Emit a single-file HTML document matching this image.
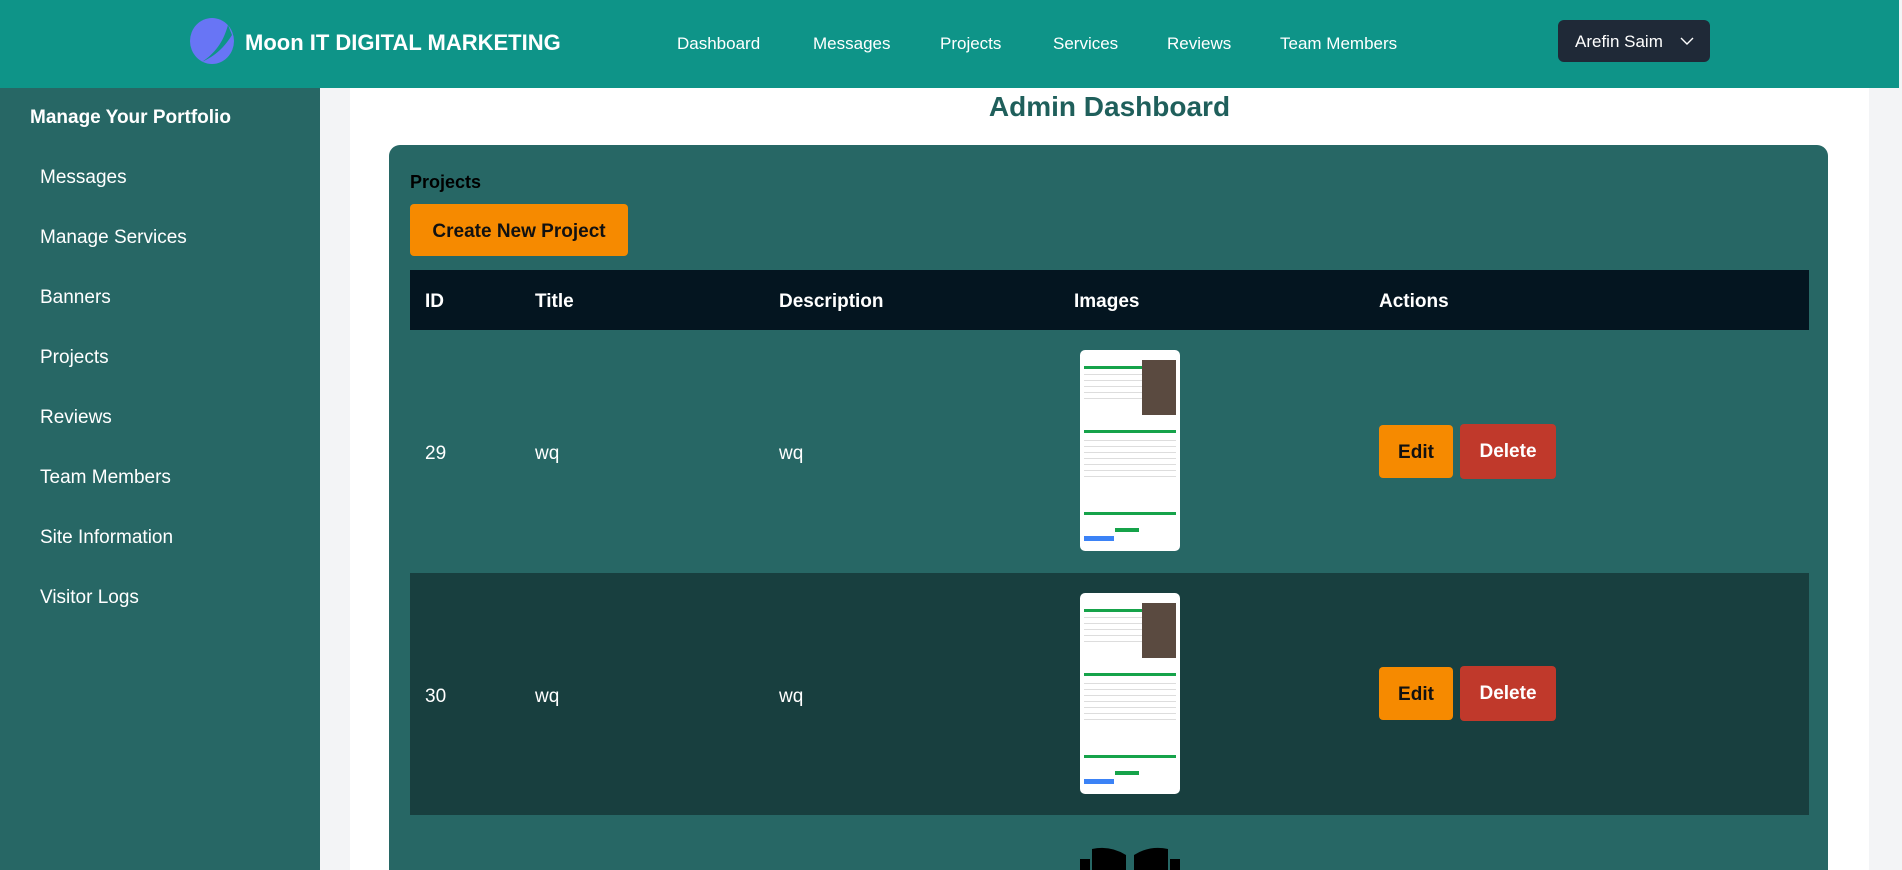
<!DOCTYPE html>
<html style="width:1902px;height:870px;overflow:hidden"><head><meta charset="utf-8"><style>
*{margin:0;padding:0;box-sizing:border-box}
body{width:1902px;height:870px;overflow:hidden;background:#f3f4f6;font-family:"Liberation Sans",sans-serif;position:relative}
.hdr{position:absolute;left:0;top:0;width:1899px;height:88px;background:#0e9488;color:#fff}
.abs{position:absolute}
.nav{position:absolute;top:34px;font-size:17px;color:#fff}
.side{position:absolute;left:0;top:88px;width:320px;height:782px;background:#276765;color:#fff}
.side .it{position:absolute;left:40px;font-size:19px}
.panel{position:absolute;left:350px;top:88px;width:1519px;height:782px;background:#fff}
.card{position:absolute;left:389px;top:145px;width:1439px;height:725px;background:#276765;border-radius:11px 11px 0 0}
.th{position:absolute;top:291px;font-size:19px;font-weight:bold;color:#fff}
.td{position:absolute;font-size:19px;color:#fff}
.thumb{position:absolute;left:1080px;width:100px;height:201px;background:#fff;border-radius:5px;overflow:hidden}
.btn{position:absolute;border-radius:4px;font-size:19px;font-weight:bold;text-align:center;line-height:55px}
</style></head><body>
<div class="hdr">
 <svg class="abs" style="left:188px;top:17px" width="48" height="48" viewBox="0 0 48 48"><ellipse cx="24" cy="24" rx="22" ry="23" fill="#6875f5"/><path d="M40 8 C36 22 30 34 14 45 C24 40 34 34 44 18 Z" fill="#0e9488"/></svg>
 <div class="abs" style="left:245px;top:30px;font-size:22px;font-weight:bold">Moon IT DIGITAL MARKETING</div>
 <div class="nav" style="left:677px">Dashboard</div>
 <div class="nav" style="left:813px">Messages</div>
 <div class="nav" style="left:940px">Projects</div>
 <div class="nav" style="left:1053px">Services</div>
 <div class="nav" style="left:1167px">Reviews</div>
 <div class="nav" style="left:1280px">Team Members</div>
 <div class="abs" style="left:1558px;top:20px;width:152px;height:42px;background:#1f2937;border-radius:6px;font-size:17px;line-height:44px;padding-left:17px">Arefin Saim
  <svg class="abs" style="left:122px;top:17px" width="14" height="9" viewBox="0 0 14 9"><path d="M1 1 L7 7 L13 1" stroke="#fff" stroke-width="1.4" fill="none"/></svg></div>
</div>
<div class="side">
 <div class="abs" style="left:30px;top:19px;font-size:19px;font-weight:bold">Manage Your Portfolio</div>
 <div class="it" style="top:79px">Messages</div>
 <div class="it" style="top:139px">Manage Services</div>
 <div class="it" style="top:199px">Banners</div>
 <div class="it" style="top:259px">Projects</div>
 <div class="it" style="top:319px">Reviews</div>
 <div class="it" style="top:379px">Team Members</div>
 <div class="it" style="top:439px">Site Information</div>
 <div class="it" style="top:499px">Visitor Logs</div>
</div>
<div class="panel"></div>
<div class="abs" style="left:350px;width:1519px;top:91px;text-align:center;font-size:28px;font-weight:bold;color:#1f5f5b">Admin Dashboard</div>
<div class="card"></div>
<div class="abs" style="left:410px;top:172px;font-size:18px;font-weight:bold;color:#000">Projects</div>
<div class="abs" style="left:410px;top:204px;width:218px;height:52px;background:#f68a00;border-radius:4px;font-size:19px;font-weight:bold;line-height:56px;text-align:center;color:#111">Create New Project</div>
<div class="abs" style="left:410px;top:270px;width:1399px;height:60px;background:#041520"></div>
<div class="th" style="left:425px">ID</div><div class="th" style="left:535px">Title</div><div class="th" style="left:779px">Description</div><div class="th" style="left:1074px">Images</div><div class="th" style="left:1379px">Actions</div>
<div class="abs" style="left:410px;top:573px;width:1399px;height:242px;background:#183f3f"></div>
<div class="td" style="left:425px;top:443px">29</div><div class="td" style="left:535px;top:443px">wq</div><div class="td" style="left:779px;top:443px">wq</div>
<div class="td" style="left:425px;top:686px">30</div><div class="td" style="left:535px;top:686px">wq</div><div class="td" style="left:779px;top:686px">wq</div>
<div class="thumb" style="top:350px"><svg width="100" height="201"><rect x="4" y="16" width="92" height="3" fill="#16a34a"/><g fill="#ddd"><rect x="4" y="24" width="60" height="1"/><rect x="4" y="30" width="60" height="1"/><rect x="4" y="36" width="60" height="1"/><rect x="4" y="42" width="60" height="1"/><rect x="4" y="48" width="60" height="1"/></g><rect x="62" y="10" width="34" height="55" fill="#5a4a40"/><rect x="4" y="80" width="92" height="3" fill="#16a34a"/><g fill="#ddd"><rect x="4" y="90" width="92" height="1"/><rect x="4" y="96" width="92" height="1"/><rect x="4" y="102" width="92" height="1"/><rect x="4" y="108" width="92" height="1"/><rect x="4" y="114" width="92" height="1"/><rect x="4" y="120" width="92" height="1"/><rect x="4" y="126" width="92" height="1"/></g><rect x="4" y="162" width="92" height="3" fill="#16a34a"/><rect x="35" y="178" width="24" height="4" fill="#16a34a"/><rect x="4" y="186" width="30" height="5" fill="#3b82f6"/></svg></div>
<div class="thumb" style="top:593px"><svg width="100" height="201"><rect x="4" y="16" width="92" height="3" fill="#16a34a"/><g fill="#ddd"><rect x="4" y="24" width="60" height="1"/><rect x="4" y="30" width="60" height="1"/><rect x="4" y="36" width="60" height="1"/><rect x="4" y="42" width="60" height="1"/><rect x="4" y="48" width="60" height="1"/></g><rect x="62" y="10" width="34" height="55" fill="#5a4a40"/><rect x="4" y="80" width="92" height="3" fill="#16a34a"/><g fill="#ddd"><rect x="4" y="90" width="92" height="1"/><rect x="4" y="96" width="92" height="1"/><rect x="4" y="102" width="92" height="1"/><rect x="4" y="108" width="92" height="1"/><rect x="4" y="114" width="92" height="1"/><rect x="4" y="120" width="92" height="1"/><rect x="4" y="126" width="92" height="1"/></g><rect x="4" y="162" width="92" height="3" fill="#16a34a"/><rect x="35" y="178" width="24" height="4" fill="#16a34a"/><rect x="4" y="186" width="30" height="5" fill="#3b82f6"/></svg></div>
<svg class="abs" style="left:1080px;top:845px" width="100" height="25"><path d="M0 25 V14 H10 V25Z M12 25 V4 Q30 0 46 10 V25Z M54 25 V10 Q70 0 88 4 V25Z M90 25 V14 H100 V25Z" fill="#000"/></svg>
<div class="btn" style="left:1379px;top:425px;width:74px;height:53px;background:#f68a00;color:#111">Edit</div>
<div class="btn" style="left:1460px;top:424px;width:96px;height:55px;background:#c0392b;color:#fff">Delete</div>
<div class="btn" style="left:1379px;top:667px;width:74px;height:53px;background:#f68a00;color:#111">Edit</div>
<div class="btn" style="left:1460px;top:666px;width:96px;height:55px;background:#c0392b;color:#fff">Delete</div>
</body></html>
